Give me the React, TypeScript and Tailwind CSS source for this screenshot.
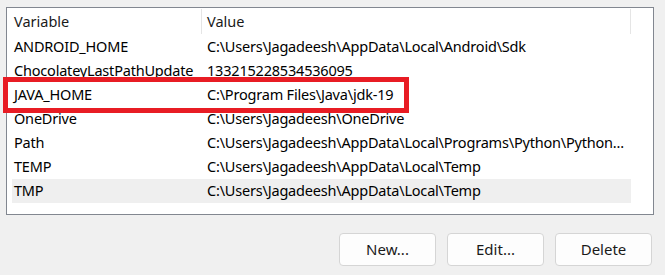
import React from 'react'

const rows: { name: string; value: string }[] = [
  { name: 'ANDROID_HOME', value: 'C:\\Users\\Jagadeesh\\AppData\\Local\\Android\\Sdk' },
  { name: 'ChocolateyLastPathUpdate', value: '133215228534536095' },
  { name: 'JAVA_HOME', value: 'C:\\Program Files\\Java\\jdk-19' },
  { name: 'OneDrive', value: 'C:\\Users\\Jagadeesh\\OneDrive' },
  { name: 'Path', value: 'C:\\Users\\Jagadeesh\\AppData\\Local\\Programs\\Python\\Python...' },
  { name: 'TEMP', value: 'C:\\Users\\Jagadeesh\\AppData\\Local\\Temp' },
  { name: 'TMP', value: 'C:\\Users\\Jagadeesh\\AppData\\Local\\Temp' },
]

function Button({ label }: { label: string }) {
  return (
    <button className="w-[97px] h-[33px] rounded-[4px] border border-[#d5d5d5] bg-[#fdfdfd] text-[15px] text-[#1a1a1a]">
      {label}
    </button>
  )
}

export default function App() {
  return (
    <div
      className="relative w-[665px] h-[275px] bg-[#f0f0f0] pt-[7px] overflow-hidden"
      style={{ fontFamily: '"Noto Sans", "Open Sans", sans-serif' }}
    >
      <div className="ml-[6px] w-[648px] h-[208px] border border-[#828790] bg-white">
        {/* header */}
        <div className="flex items-center h-[27px] ml-[5px] text-[14.5px] text-[#1a1a1a]">
          <div className="w-[189px] pl-[2px]">Variable</div>
          <div className="w-px h-[25px] bg-[#e5e5e5]" />
          <div className="w-[428px] pl-[5px]">Value</div>
          <div className="w-px h-[25px] bg-[#e5e5e5]" />
        </div>

        {rows.map((r, i) => (
          <div
            key={r.name}
            className={
              'flex items-center h-[24px] ml-[5px] w-[619px] text-[14.5px] tracking-[-0.2px] text-black ' +
              (i === rows.length - 1 ? 'bg-[#efefef]' : '')
            }
          >
            <div className="w-[195px] pl-[2px] whitespace-nowrap">{r.name}</div>
            <div className="w-[424px] whitespace-nowrap">{r.value}</div>
          </div>
        ))}
      </div>

      <div className="flex justify-end gap-[11px] pr-[13px] mt-[18px]">
        <Button label="New..." />
        <Button label="Edit..." />
        <Button label="Delete" />
      </div>

      {/* highlight box */}
      <div className="absolute left-[3px] top-[77px] w-[406px] h-[36px] border-[5px] border-[#e81c24]" />
    </div>
  )
}
